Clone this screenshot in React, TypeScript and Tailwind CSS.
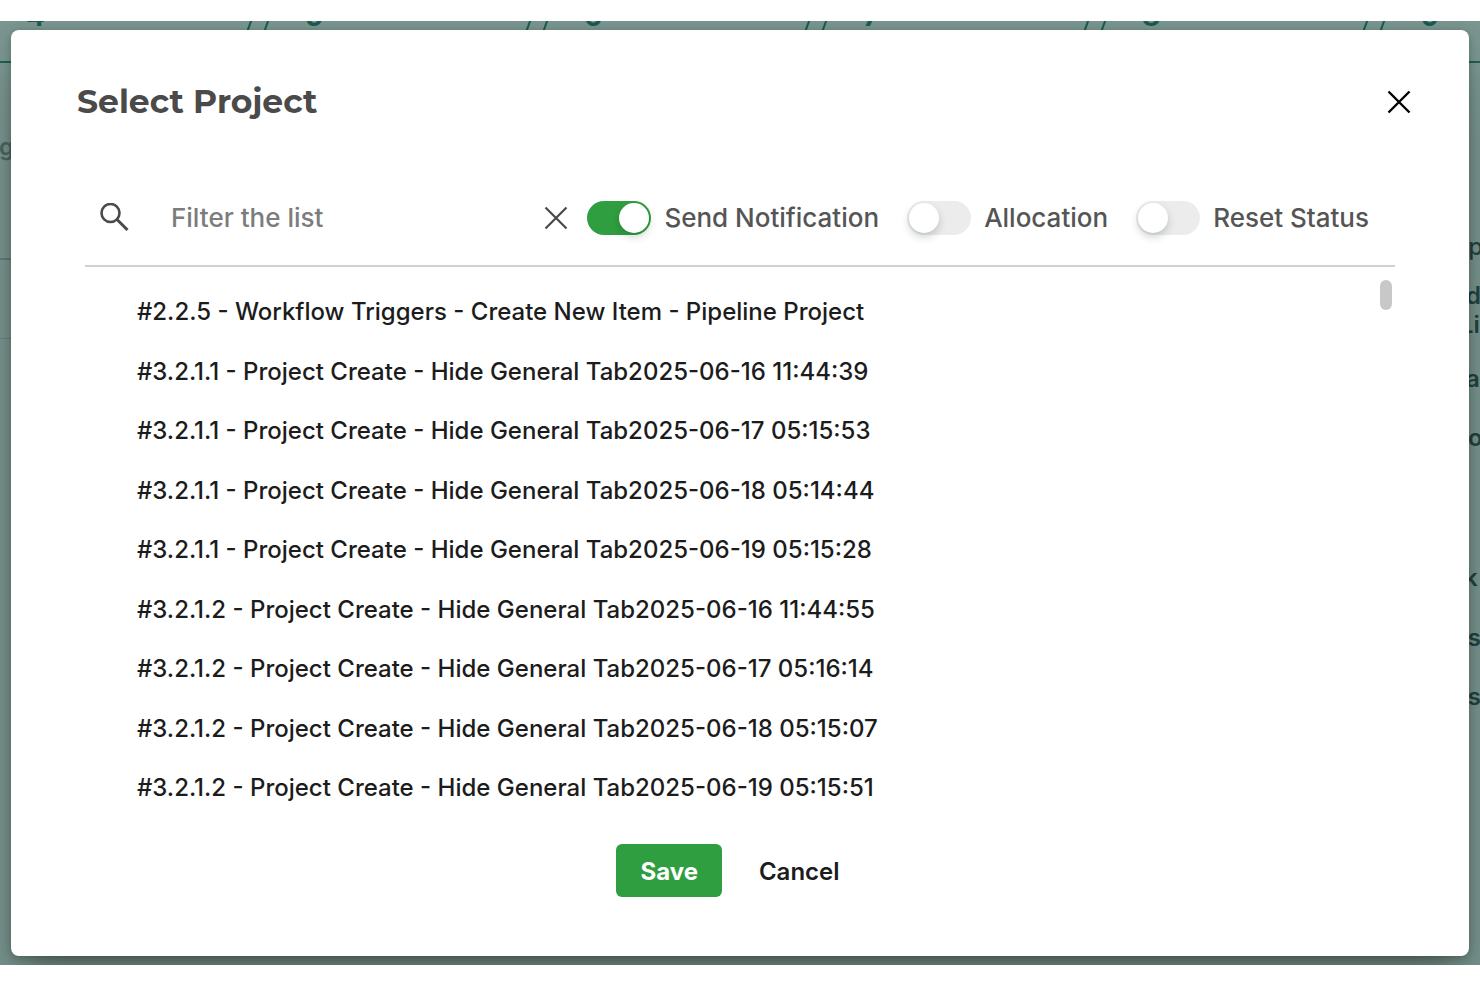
import { useState } from 'react';

const projects = [
    '#2.2.5 - Workflow Triggers - Create New Item - Pipeline Project',
    '#3.2.1.1 - Project Create - Hide General Tab2025-06-16 11:44:39',
    '#3.2.1.1 - Project Create - Hide General Tab2025-06-17 05:15:53',
    '#3.2.1.1 - Project Create - Hide General Tab2025-06-18 05:14:44',
    '#3.2.1.1 - Project Create - Hide General Tab2025-06-19 05:15:28',
    '#3.2.1.2 - Project Create - Hide General Tab2025-06-16 11:44:55',
    '#3.2.1.2 - Project Create - Hide General Tab2025-06-17 05:16:14',
    '#3.2.1.2 - Project Create - Hide General Tab2025-06-18 05:15:07',
    '#3.2.1.2 - Project Create - Hide General Tab2025-06-19 05:15:51',
];

const stages = [4, 5, 6, 7, 8, 9];

function CloseIcon({ className, strokeWidth }: { className: string; strokeWidth: number }) {
    return (
        <svg viewBox="0 0 24 24" fill="none" stroke="currentColor" strokeWidth={strokeWidth} className={className}>
            <path d="M1.5 1.5l21 21M22.5 1.5l-21 21" />
        </svg>
    );
}

function Toggle({ label, defaultChecked = false }: { label: string; defaultChecked?: boolean }) {
    const [on, setOn] = useState(defaultChecked);
    return (
        <label className="flex items-center gap-[13px] text-[26px] leading-8 font-medium text-[#555555] whitespace-nowrap">
            <input
                type="checkbox"
                role="switch"
                checked={on}
                onChange={(e) => setOn(e.target.checked)}
                className="flex h-[34px] w-16 shrink-0 appearance-none items-center rounded-full bg-[#ececec] px-[2px] before:size-[30px] before:rounded-full before:bg-white before:shadow-[0_4px_8px_rgba(0,35,11,0.2)] before:content-[''] checked:justify-end checked:bg-[#2f9e41]"
            />
            {label}
        </label>
    );
}

// Dimmed page that stays visible around the edges of the dialog
function PageBehind() {
    return (
        <div aria-hidden="true" className="absolute inset-0 overflow-hidden text-[24px] leading-[30px] font-semibold text-[#24443f]">
            <div className="flex h-[42px] border-b-2 border-[#1f6156] text-[28px] font-bold text-[#1c5b51]">
                {stages.map((stage) => (
                    <div key={stage} className="flex w-[279px] shrink-0 items-start justify-between pl-[26px]">
                        <span className="-mt-5">{stage}</span>
                        <svg viewBox="0 0 32 20" className="h-5 w-8" fill="none" stroke="currentColor" strokeWidth="2">
                            <path d="M4.5 -1L-1 14M21.500 -1L16 14" />
                        </svg>
                    </div>
                ))}
            </div>
            <div className="flex justify-between">
                <div className="flex w-[18px] flex-col">
                    <div className="flex h-[197px] justify-end border-b-2 border-[#647d78] pt-[69px] pr-1 text-[#4c6762]">
                        <span>ag</span>
                    </div>
                    <div className="h-[79px] border-b border-[#6b8580]" />
                </div>
                <div className="flex w-[22px] flex-col items-start pt-[169px]">
                    <span className="h-[49px] pl-[2px] font-medium">tp</span>
                    <span className="h-[29px] pl-2">d</span>
                    <span className="h-[54px] pl-[2px]">Li</span>
                    <span className="h-[59px] pl-2">a</span>
                    <span className="h-[140px] pl-[10px]">o</span>
                    <span className="h-[60px] pl-[6px]">k</span>
                    <span className="-ml-1 h-[59px]">as</span>
                    <span className="-ml-1 h-[59px]">as</span>
                </div>
            </div>
        </div>
    );
}

export default function App() {
    const [filter, setFilter] = useState('');
    const visible = projects.filter((p) => p.toLowerCase().includes(filter.toLowerCase()));

    return (
        <div className="bg-white py-[21px] font-['Inter',sans-serif]">
            <div className="relative overflow-hidden bg-[#7a9690] px-[11px] pt-[9px] pb-[9px]">
                <PageBehind />

                <div
                    role="dialog"
                    aria-labelledby="dialog-title"
                    className="relative rounded-lg bg-white pb-[59px] shadow-[0_22px_30px_-14px_rgba(0,0,0,0.25),0_48px_76px_6px_rgba(0,0,0,0.14),0_2px_8px_rgba(0,0,0,0.25)]"
                >
                    {/* Header */}
                    <div className="flex items-center justify-between pt-[50px] pr-[58px] pl-[66px]">
                        <h2 id="dialog-title" className="font-['Montserrat','Inter',sans-serif] text-[33px] leading-[43px] font-bold text-[#4a4a4a]">
                            Select Project
                        </h2>
                        <button type="button" aria-label="Close" className="text-black">
                            <CloseIcon className="size-6" strokeWidth={2.4} />
                        </button>
                    </div>

                    {/* Filter bar */}
                    <div className="mx-[74px] mt-[61px] flex h-[83px] items-start border-b-2 border-[#d0d0d0] pr-[26px] pl-[14px]">
                        <div className="flex h-[67px] min-w-0 flex-1 items-center">
                            <svg viewBox="0 0 30 30" className="size-[30px] shrink-0 text-[#4a4a4a]" fill="none" stroke="currentColor" strokeWidth="2.6">
                                <circle cx="11.5" cy="10" r="9" />
                                <path d="M18 16.5l10.5 10.5" strokeWidth="3" />
                            </svg>
                            <input
                                type="text"
                                aria-label="Filter the list"
                                placeholder="Filter the list"
                                value={filter}
                                onChange={(e) => setFilter(e.target.value)}
                                className="ml-[42px] min-w-0 flex-1 text-[26px] leading-8 font-medium text-[#555555] outline-none placeholder:text-[#7c7c7c]"
                            />
                            <button type="button" aria-label="Clear filter" onClick={() => setFilter('')} className="mr-[19px] text-[#4a4a4a]">
                                <CloseIcon className="size-6" strokeWidth={2.2} />
                            </button>
                        </div>
                        <div className="flex h-[67px] items-center gap-7">
                            <Toggle label="Send Notification" defaultChecked />
                            <Toggle label="Allocation" />
                            <Toggle label="Reset Status" />
                        </div>
                    </div>

                    {/* Project list */}
                    <div className="mx-[74px] flex items-start pt-[13px] pr-[3px]">
                        <ul className="h-[537px] flex-1 overflow-hidden pt-[2px] pl-[52px]">
                            {visible.map((name) => (
                                <li key={name} className="flex h-[60px] items-center text-[24px] leading-8 font-medium text-[#1c1c1c] even:h-[59px]">
                                    {name}
                                </li>
                            ))}
                        </ul>
                        <div className="h-[30px] w-[12px] rounded-full bg-[#c8c8c8]" />
                    </div>

                    {/* Actions */}
                    <div className="mt-[27px] flex items-center justify-center gap-[37px] pr-[24px] text-[24px] leading-8">
                        <button type="button" className="h-[53px] rounded-md bg-[#2f9e41] px-[24px] pt-[2px] font-bold text-white">
                            Save
                        </button>
                        <button type="button" className="pt-[2px] font-semibold text-[#1c1c1c]">
                            Cancel
                        </button>
                    </div>
                </div>
            </div>
        </div>
    );
}
